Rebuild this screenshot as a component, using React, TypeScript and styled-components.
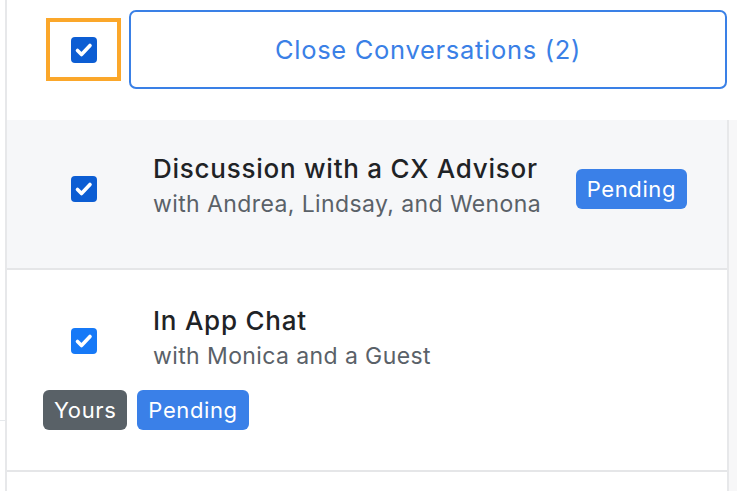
import styled, { createGlobalStyle } from "styled-components";

const GlobalStyle = createGlobalStyle`
    html, body {
        margin: 0;
        padding: 0;
        background: #ffffff;
    }
    body {
        font-family: Inter, "Noto Sans", "Liberation Sans", sans-serif;
        color: #212529;
    }
`

const Page = styled.div`
    display: flex;
    min-height: 491px;
    overflow: hidden;
`
const Gutter = styled.div`
    width: 5px;
    flex-shrink: 0;
`
const GutterRule = styled.div`
    margin-top: 420px;
    height: 1px;
    background: #e6e9ec;
`
const Panel = styled.div`
    flex: 1;
    display: flex;
    flex-direction: column;
    border-left: 2px solid #e7e8ea;
`
const Toolbar = styled.div`
    display: flex;
    align-items: center;
    gap: 8px;
    padding: 10px 10px 31px 39px;
`
const FocusRing = styled.div`
    display: flex;
    align-items: center;
    justify-content: center;
    padding: 15px 20px 14px 21px;
    border: 4px solid #fba72a;
`
const CloseButton = styled.button`
    flex: 1;
    height: 79px;
    border: 2px solid #3a80e6;
    border-radius: 7px;
    background: #ffffff;
    color: #3a80e6;
    font-family: inherit;
    font-size: 25.5px;
    font-weight: 400;
    letter-spacing: 0.7px;
    cursor: pointer;
`
const ListArea = styled.div`
    flex: 1;
    display: flex;
`
const List = styled.div`
    flex: 1;
    border-right: 2px solid #e7e8ea;
`
const Track = styled.div`
    width: 8px;
    background: #f7f7f8;
`
const Row = styled.div<{ $shaded?: boolean; $stacked?: boolean }>`
    display: flex;
    flex-direction: ${p => (p.$stacked ? "column" : "row")};
    align-items: ${p => (p.$stacked ? "flex-start" : "center")};
    padding: ${p => (p.$stacked ? "32px 40px 40px 36px" : "30px 40px 40px 64px")};
    background: ${p => (p.$shaded ? "#f6f7f9" : "#ffffff")};
    border-bottom: 2px solid #e5e6e8;
`
const Main = styled.div<{ $indent?: boolean }>`
    display: flex;
    align-items: center;
    padding-left: ${p => (p.$indent ? "28px" : "0")};
`
const Box = styled.span<{ $tone: "dark" | "bright" }>`
    display: inline-flex;
    width: 26px;
    height: 26px;
    flex-shrink: 0;
    border-radius: 4px;
    background: ${p => (p.$tone === "dark" ? "#0c5dd3" : "#1679f7")};

    svg {
        width: 26px;
        height: 26px;
    }
`
const Text = styled.div`
    margin-left: 56px;
    padding-bottom: 8px;
`
const Title = styled.div`
    font-size: 26px;
    font-weight: 500;
    line-height: 38px;
    letter-spacing: 0.75px;
    color: #1f2326;
`
const Subtitle = styled.div`
    font-size: 23px;
    line-height: 32px;
    letter-spacing: 0.4px;
    color: #5a6168;
`
const Badges = styled.div<{ $stacked?: boolean }>`
    display: flex;
    gap: 10px;
    margin-left: ${p => (p.$stacked ? "0" : "auto")};
    margin-top: ${p => (p.$stacked ? "10px" : "0")};
`
const Badge = styled.span<{ $kind: "primary" | "dark" }>`
    display: inline-flex;
    align-items: center;
    height: 40px;
    padding: 0 11px;
    border-radius: 6px;
    background: ${p => (p.$kind === "primary" ? "#3a80e8" : "#596167")};
    color: #ffffff;
    font-size: 22px;
    font-weight: 400;
    letter-spacing: 0.6px;
`

const Checkbox = ({ tone }: { tone: "dark" | "bright" }) => (
    <Box $tone={tone}>
        <svg viewBox="0 0 26 26" fill="none">
            <path d="M6.5 13.5l4 4l8.5-9" stroke="#ffffff" strokeWidth="3.6" strokeLinecap="round" strokeLinejoin="round" />
        </svg>
    </Box>
)

type Conversation = {
    title: string
    people: string
    badges: { label: string; kind: "primary" | "dark" }[]
    shaded?: boolean
    stacked?: boolean
    tone: "dark" | "bright"
}

const conversations: Conversation[] = [
    {
        title: "Discussion with a CX Advisor",
        people: "with Andrea, Lindsay, and Wenona",
        badges: [{ label: "Pending", kind: "primary" }],
        shaded: true,
        tone: "dark",
    },
    {
        title: "In App Chat",
        people: "with Monica and a Guest",
        badges: [
            { label: "Yours", kind: "dark" },
            { label: "Pending", kind: "primary" },
        ],
        stacked: true,
        tone: "bright",
    },
]

export default function App() {
    return (
        <>
            <GlobalStyle />
            <Page>
                <Gutter>
                    <GutterRule />
                </Gutter>
                <Panel>
                    <Toolbar>
                        <FocusRing>
                            <Checkbox tone="dark" />
                        </FocusRing>
                        <CloseButton>Close Conversations (2)</CloseButton>
                    </Toolbar>
                    <ListArea>
                        <List>
                            {conversations.map(c => (
                                <Row key={c.title} $shaded={c.shaded} $stacked={c.stacked}>
                                    <Main $indent={c.stacked}>
                                        <Checkbox tone={c.tone} />
                                        <Text>
                                            <Title>{c.title}</Title>
                                            <Subtitle>{c.people}</Subtitle>
                                        </Text>
                                    </Main>
                                    <Badges $stacked={c.stacked}>
                                        {c.badges.map(b => (
                                            <Badge key={b.label} $kind={b.kind}>{b.label}</Badge>
                                        ))}
                                    </Badges>
                                </Row>
                            ))}
                        </List>
                        <Track />
                    </ListArea>
                </Panel>
            </Page>
        </>
    )
}
